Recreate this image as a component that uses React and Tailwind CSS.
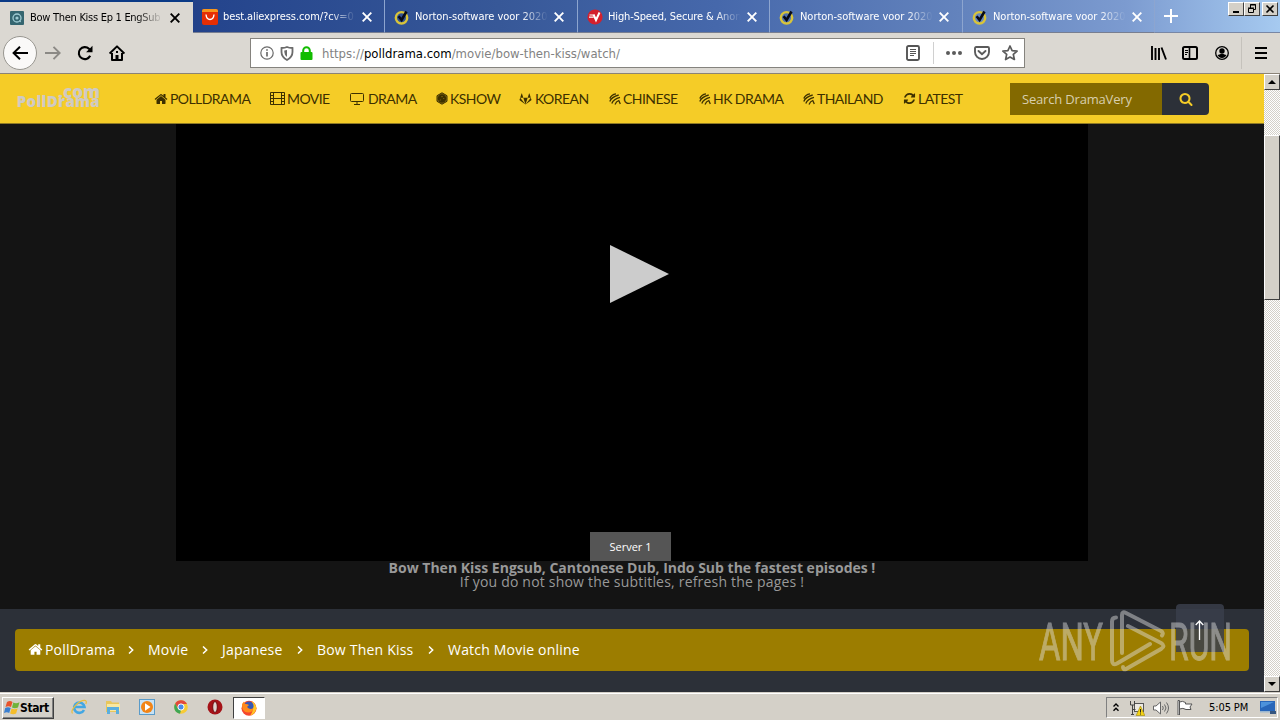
import { FaGitlab } from "react-icons/fa";

const HOME =
  "M1472 992v480q0 26-19 45t-45 19h-384v-384h-256v384h-384q-26 0-45-19t-19-45v-480q0-1 .5-3t.5-3l575-474 575 474q1 2 1 6zm223-69l-62 74q-8 9-21 11h-3q-13 0-21-7l-692-577-692 577q-12 8-24 7-13-2-21-11l-62-74q-8-10-7-23.5t11-21.5l719-599q32-26 76-26t76 26l244 204v-195q0-14 9-23t23-9h192q14 0 23 9t9 23v408l219 182q10 8 11 21.5t-7 23.5z";
const SEARCH =
  "M1216 832q0-185-131.5-316.5t-316.5-131.5-316.5 131.5-131.5 316.5 131.5 316.5 316.5 131.5 316.5-131.5 131.5-316.5zm512 832q0 52-38 90t-90 38q-54 0-90-38l-343-342q-179 124-399 124-143 0-273.5-55.5t-225-150-150-225-55.5-273.5 55.5-273.5 150-225 225-150 273.5-55.5 273.5 55.5 225 150 150 225 55.5 273.5q0 220-124 399l343 343q37 37 37 90z";
const REFRESH =
  "M1639 1056q0 5-1 7-64 268-268 434.5t-478 166.5q-146 0-282.5-55t-243.5-157l-129 129q-19 19-45 19t-45-19-19-45v-448q0-26 19-45t45-19h448q26 0 45 19t19 45-19 45l-137 137q71 66 161 102t187 36q134 0 250-65t186-179q11-17 53-117 8-23 30-23h192q13 0 22.5 9.5t9.5 22.5zm25-800v448q0 26-19 45t-45 19h-448q-26 0-45-19t-19-45 19-45l138-138q-148-137-349-137-134 0-250 65t-186 179q-11 17-53 117-8 23-30 23h-199q-13 0-22.5-9.5t-9.5-22.5v-7q65-268 270-434.5t480-166.5q146 0 284 55.5t245 156.5l130-129q19-19 45-19t45 19 19 45z";

const Glyph = ({ d, className }) => (
  <svg viewBox="0 0 1792 1792" className={className} fill="currentColor">
    <path d={d} />
  </svg>
);

const Film = () => (
  <svg viewBox="0 0 15 13" className="w-[15px] h-[13px] shrink-0" fill="none" stroke="currentColor">
    <path d="M.5 .5h14v12H.5zM3.5 .5v12M11.5 .5v12M3.5 6.5h8M.5 3.5h3M.5 6.5h3M.5 9.5h3M11.5 3.5h3M11.5 6.5h3M11.5 9.5h3" />
  </svg>
);

const Desktop = () => (
  <svg viewBox="0 0 15 13" className="w-[15px] h-[13px] shrink-0" fill="none" stroke="currentColor">
    <rect x=".5" y="1.5" width="13" height="8" rx="1" />
    <path d="M7 9.5v2.5M4 12.5h6" />
  </svg>
);

const Order = () => (
  <svg viewBox="0 0 12 13" className="w-3 h-[13px] shrink-0" fill="none" stroke="currentColor">
    <path d="M6 .8l5 2.9v5.6l-5 2.9-5-2.9V3.7z" fill="currentColor" fillOpacity=".55" />
    <circle cx="6" cy="6.5" r="4.2" fill="currentColor" stroke="none" />
    <path d="M6 4v1.2M8.2 6.5H7.4M3.8 8.5l.8-.6" stroke="#f5cc27" strokeWidth=".5" />
  </svg>
);

const Stripes = () => (
  <svg viewBox="0 0 12 12" className="w-3 h-3 shrink-0" fill="none" stroke="currentColor" strokeWidth="1.3">
    <path d="M.8 5.500Q2.200 1.500 7 .8M.8 8.500Q2.500 3.800 9.700 2M2.800 10.600Q4.500 6 11 4.400M6 11.400Q7.300 8.500 9.800 7.500L11.300 11" />
  </svg>
);

const Close = ({ className }) => (
  <svg viewBox="0 0 10 10" className={`w-[10px] h-[10px] shrink-0 ${className}`} fill="none" stroke="currentColor" strokeWidth="1.9">
    <path d="M.7 .7l8.6 8.6M9.3 .7L.7 9.3" />
  </svg>
);

const DramaIcon = () => (
  <svg viewBox="0 0 14 14" className="w-[14px] h-[14px] shrink-0" fill="none">
    <rect width="14" height="14" rx="1" fill="#356670" />
    <circle cx="7" cy="7" r="4" stroke="#9fcbd3" strokeWidth="1.3" />
    <circle cx="7" cy="7" r="1.6" fill="#9fcbd3" />
    <path d="M9 9.500l2 1.500" stroke="#9fcbd3" />
  </svg>
);

const AliIcon = () => (
  <svg viewBox="0 0 16 16" className="w-4 h-4 shrink-0" fill="none">
    <rect width="16" height="16" rx="2" fill="#e62e04" />
    <path d="M0 3V2q0-2 2-2h12q2 0 2 2v1z" fill="#f7971d" />
    <path d="M4 5.5q.5 5 4 5t4-5" stroke="#fff" strokeWidth="1.4" />
  </svg>
);

const NortonIcon = () => (
  <svg viewBox="0 0 16 16" className="w-4 h-4 shrink-0" fill="none">
    <circle cx="7.5" cy="8.800" r="5.700" stroke="#d8c43a" strokeWidth="2.400" />
    <path d="M4.600 7.200l3 3.800L12.500 2.500" stroke="#080b18" strokeWidth="2.600" />
  </svg>
);

const VpnIcon = () => (
  <svg viewBox="0 0 16 16" className="w-4 h-4 shrink-0" fill="none">
    <circle cx="8" cy="8" r="7.6" fill="#d3202d" />
    <path d="M2.5 6h4M2 8.2h4.7" stroke="#fff" strokeWidth="1.2" />
    <path d="M6.5 5.5L9 11l3.5-7.5" stroke="#fff" strokeWidth="2" />
  </svg>
);

const tabs = [
  { title: "best.aliexpress.com/?cv=0", icon: <AliIcon />, size: "w-[192px]", tracking: "tracking-[-0.1px]" },
  { title: "Norton-software voor 2020", icon: <NortonIcon />, size: "w-[193px]", tracking: "tracking-[-0.03px]" },
  { title: "High-Speed, Secure & Anon", icon: <VpnIcon />, size: "w-[192px]", tracking: "tracking-[-0.15px]" },
  { title: "Norton-software voor 2020", icon: <NortonIcon />, size: "w-[193px]", tracking: "tracking-[-0.03px]" },
  { title: "Norton-software voor 2020", icon: <NortonIcon />, size: "w-[192px]", tracking: "tracking-[-0.03px]" },
];

const TabTitle = ({ children, className }) => (
  <span className={`w-[133px] shrink-0 overflow-hidden whitespace-nowrap text-[11px] leading-4 [mask-image:linear-gradient(to_right,black_80%,transparent_100%)] ${className}`}>
    {children}
  </span>
);

const raised = "border border-t-white border-l-white border-r-[#404040] border-b-[#404040] bg-[#d4d0c8]";

const WinButton = ({ children, className }) => (
  <div className={`flex h-[14px] w-4 items-center justify-center ${raised} ${className}`}>{children}</div>
);

const TabBar = () => (
  <div className="flex h-[33px] bg-[linear-gradient(to_right,#0a246a_0%,#25458d_17%,#375898_39%,#4668ab_56%,#6383bd_75%,#7c9bd0_88%,#a6caf0_100%)]">
    <div className="flex w-[193px] items-center border-t-2 border-[#0a3a86] bg-[#dbd8d2] pl-[10px] text-black">
      <DramaIcon />
      <TabTitle className="ml-1.5 tracking-[-0.28px]">Bow Then Kiss Ep 1 EngSub</TabTitle>
      <Close className="ml-[7px]" />
    </div>
    {tabs.map((tab, i) => (
      <div
        key={i}
        className={`flex shrink-0 items-center border-r border-b border-r-[#8da5cf] border-b-[#777e91] pt-0.5 pl-[9px] text-white ${tab.size}`}
      >
        {tab.icon}
        <TabTitle className={`ml-[5px] ${tab.tracking}`}>{tab.title}</TabTitle>
        <Close className="ml-1.5" />
      </div>
    ))}
    <div className="flex grow justify-between border-b border-[#7887a5] pl-[9px] text-white">
      <svg viewBox="0 0 14 14" className="mt-[9px] h-[14px] w-[14px]" fill="none" stroke="currentColor" strokeWidth="2">
        <path d="M7 0v14M0 7h14" />
      </svg>
      <div className="mt-0.5 mr-[2px] flex">
        <WinButton>
          <svg viewBox="0 0 10 10" className="h-[10px] w-[10px]"><path d="M2 7h6v2H2z" /></svg>
        </WinButton>
        <WinButton>
          <svg viewBox="0 0 10 10" className="h-[10px] w-[10px]" fill="none" stroke="#000">
            <path d="M3.5 4V.5h5v5H7M3 1h6M1.5 4.5h5v4h-5zM1 4h6" />
          </svg>
        </WinButton>
        <WinButton className="ml-[2px]">
          <svg viewBox="0 0 10 10" className="h-[10px] w-[10px]" fill="none" stroke="#000" strokeWidth="1.6">
            <path d="M1.5 1.5l7 7M8.5 1.5l-7 7" />
          </svg>
        </WinButton>
      </div>
    </div>
  </div>
);

const Toolbar = () => (
  <div className="flex h-[41px] items-center border-b border-[#8b8377] bg-[#dbd8d2] text-black">
    {/* History buttons */}
    <div className="ml-[3px] flex h-[34px] w-[34px] shrink-0 items-center justify-center rounded-full border border-[#989690] bg-[#faf9f8]">
      <svg viewBox="0 0 16 16" className="h-4 w-4" fill="none" stroke="currentColor" strokeWidth="2">
        <path d="M16 8H1.8M8 1.8L1.6 8 8 14.2" />
      </svg>
    </div>
    <svg viewBox="0 0 16 16" className="ml-2 h-4 w-4 shrink-0" fill="none" stroke="#8b8985" strokeWidth="1.9">
      <path d="M0 8h14.4M8.5 1.8L14.7 8l-6.2 6.2" />
    </svg>
    <svg viewBox="0 0 16 16" className="ml-4 h-4 w-4 shrink-0" fill="none" stroke="currentColor" strokeWidth="2.1">
      <path d="M13.2 10.8A6 6 0 1 1 12 3.8l1.3 1.3" />
      <path d="M15.5 .8v6.4H9.1z" fill="currentColor" stroke="none" />
    </svg>
    <svg viewBox="0 0 16 16" className="ml-4 h-4 w-4 shrink-0" fill="none" stroke="currentColor" strokeWidth="2">
      <path d="M.6 8.6L8 1.4l7.4 7.2M3 8v7h10V8" strokeLinejoin="round" />
      <path d="M6.5 15v-5h3v5z" fill="currentColor" stroke="none" />
      <path d="M7 7h2" />
    </svg>

    {/* Address bar */}
    <div className="ml-[125px] flex h-[30px] w-[775px] shrink-0 items-center border border-[#85837e] bg-white pl-[9px]">
      <svg viewBox="0 0 14 14" className="h-[14px] w-[14px] shrink-0" fill="none" stroke="#6b6b6b" strokeWidth="1.2">
        <circle cx="7" cy="7" r="6.2" />
        <path d="M7 6v4.5M7 3.2v1.5" strokeWidth="1.7" />
      </svg>
      <svg viewBox="0 0 14 15" className="ml-[6px] h-[15px] w-[14px] shrink-0" fill="none" stroke="#6b6b6b" strokeWidth="1.8">
        <path d="M1.5 2Q5 1.9 7 1q2 .9 5.500 1v4q0 5-5.500 8-5.500-3-5.500-8z" />
        <path d="M7 4v7Q4.300 9 4.300 6V4.600z" fill="#6b6b6b" stroke="none" />
      </svg>
      <svg viewBox="0 0 13 14" className="ml-[6px] h-[14px] w-[13px] shrink-0">
        <rect x=".5" y="6" width="12" height="8" rx="1" fill="#12bc00" />
        <path d="M3.200 7V4.500a3.300 3.300 0 0 1 6.600 0V7" fill="none" stroke="#12bc00" strokeWidth="2" />
      </svg>
      <span className="ml-[9px] w-[581px] whitespace-nowrap pt-px text-[13px] text-[#828282]">
        https://<span className="text-black">polldrama.com</span>/movie/bow-then-kiss/watch/
      </span>
      <svg viewBox="0 0 14 16" className="ml-[3px] h-4 w-[14px] shrink-0" fill="none" stroke="#555">
        <rect x="1" y="1" width="12" height="14" rx="1.500" strokeWidth="1.900" />
        <path d="M4 4.500h6M4 6.500h6M4 8.500h6M4 10.500h4" />
      </svg>
      <div className="ml-[13px] h-[22px] w-px shrink-0 bg-[#d0d0d0]" />
      <svg viewBox="0 0 16 4" className="ml-3 h-1 w-4 shrink-0" fill="#5b5b5b">
        <circle cx="2" cy="2" r="2" />
        <circle cx="8" cy="2" r="2" />
        <circle cx="14" cy="2" r="2" />
      </svg>
      <svg viewBox="0 0 16 14" className="ml-3 h-[14px] w-4 shrink-0" fill="none" stroke="#5b5b5b" strokeWidth="1.900">
        <path d="M2.200 1h11.600Q15 1 15 2.200V6a7 7 0 0 1-14 0V2.200Q1 1 2.200 1z" />
        <path d="M4.500 5L8 8.300 11.500 5" strokeLinecap="round" />
      </svg>
      <svg viewBox="0 0 16 16" className="ml-3 h-4 w-4 shrink-0" fill="none" stroke="#5b5b5b" strokeWidth="1.700" strokeLinejoin="round">
        <path d="M8 1l2.100 4.600 5 .5-3.800 3.300 1.100 5.100L8 12l-4.400 2.500 1.100-5.100L.9 6.100l5-.5z" />
      </svg>
    </div>

    {/* Right side tools */}
    <svg viewBox="0 0 16 14" className="ml-[126px] h-[14px] w-4 shrink-0" fill="none" stroke="currentColor" strokeWidth="1.900">
      <path d="M1 0v14M4.500 2v12M8 2v12M10.500 1.500L15 13.500" />
    </svg>
    <svg viewBox="0 0 16 14" className="ml-[15px] h-[14px] w-4 shrink-0" fill="none" stroke="currentColor">
      <rect x="1" y="1" width="14" height="12" rx="1.500" strokeWidth="2" />
      <path d="M7.500 1v12" strokeWidth="1.600" />
      <path d="M3 4.500h3M3 6.500h3M3 8.500h2" />
    </svg>
    <svg viewBox="0 0 14 14" className="ml-[17px] h-[14px] w-[14px] shrink-0">
      <circle cx="7" cy="7" r="6.300" fill="none" stroke="#000" strokeWidth="1.300" />
      <circle cx="7" cy="5" r="2.700" />
      <path d="M2.500 9q2.500-.5 3-1h3q.5.500 3 1-1.500 3-4.500 3T2.500 9z" />
    </svg>
    <div className="ml-3 h-8 w-px bg-[#c5c2bc]" />
    <div className="ml-[13px] flex flex-col gap-[3px]">
      <div className="h-0.5 w-3 bg-black" />
      <div className="h-0.5 w-3 bg-black" />
      <div className="h-0.5 w-3 bg-black" />
    </div>
  </div>
);

const links = [
  { label: "POLLDRAMA", icon: <Glyph d={HOME} className="-ml-px w-[14px] h-[14px] shrink-0" />, size: "w-[95px]", text: "w-[80px]" },
  { label: "MOVIE", icon: <Film />, size: "w-[60px]", text: "w-[43px]" },
  { label: "DRAMA", icon: <Desktop />, size: "w-[66px]", text: "w-[48px]" },
  { label: "KSHOW", icon: <Order />, size: "w-[63px]", text: "w-[49px]" },
  { label: "KOREAN", icon: <FaGitlab className="w-[13px] h-3 shrink-0" />, size: "w-[70px]", text: "w-[54px]" },
  { label: "CHINESE", icon: <Stripes />, size: "w-[70px]", text: "w-[56px]" },
  { label: "HK DRAMA", icon: <Stripes />, size: "w-[84px]", text: "w-[70px]" },
  { label: "THAILAND", icon: <Stripes />, size: "w-[81px]", text: "w-[67px]" },
  { label: "LATEST", icon: <Glyph d={REFRESH} className="-ml-px w-[13px] h-[13px] shrink-0" />, size: "w-[60px]", text: "w-[46px]" },
];

const SiteHeader = () => (
  <header className="flex h-[50px] shrink-0 items-center border-b border-[#8f7a25] bg-[#f5cc27] text-[#3d3000]">
    <div className="ml-4 flex w-[84px] shrink-0 flex-col items-end pb-1 font-['Open_Sans',sans-serif] font-extrabold text-[#cfcac4]">
      <span className="text-[17px] leading-[10px]">.com</span>
      <span className="text-[15px] leading-[9px] tracking-[0.3px]">PollDrama</span>
    </div>
    <nav className="ml-[55px] flex gap-5 font-['Lato',sans-serif] text-[14px]">
      {links.map((link) => (
        <a key={link.label} className={`flex shrink-0 items-center justify-between whitespace-nowrap ${link.size}`}>
          {link.icon}
          <span className={`tracking-[-0.56px] ${link.text}`}>{link.label}</span>
        </a>
      ))}
    </nav>
    <div className="ml-[46px] flex h-8 shrink-0 font-['Open_Sans',sans-serif] text-[13px]">
      <div className="flex w-[152px] items-center bg-[#836900] pt-0.5 pl-3 tracking-[-0.18px] text-[#d8cfae]">Search DramaVery</div>
      <div className="flex w-[47px] items-center justify-center rounded-r bg-[#2c3038] text-[#f5cc27]">
        <Glyph d={SEARCH} className="h-[14px] w-[14px]" />
      </div>
    </div>
  </header>
);

const Player = () => (
  <section className="flex h-[485px] shrink-0 flex-col items-center bg-[#141414] font-['Open_Sans',sans-serif] text-[#999]">
    <div className="flex h-[437px] w-[912px] flex-col items-center bg-black">
      <svg viewBox="0 0 59 59" className="mt-[121px] ml-[14px] h-[59px] w-[59px]">
        <path d="M0 0l59 29L0 58z" fill="#ccc" />
      </svg>
      <div className="mt-auto mr-[3px] flex h-[29px] w-[81px] items-center justify-center bg-[#555] pt-0.5 text-[11px] text-white">
        Server 1
      </div>
    </div>
    <p className="whitespace-nowrap text-[14px] font-bold leading-[14px]">
      Bow Then Kiss Engsub, Cantonese Dub, Indo Sub the fastest episodes !
    </p>
    <p className="whitespace-nowrap text-[14px] leading-[14px] tracking-[0.2px]">
      If you do not show the subtitles, refresh the pages !
    </p>
  </section>
);

const crumbs = [
  { label: "Movie", size: "w-[40px]" },
  { label: "Japanese", size: "w-[61px]" },
  { label: "Bow Then Kiss", size: "w-[97px]" },
  { label: "Watch Movie online", size: "w-[132px]" },
];

const Breadcrumb = () => (
  <div className="flex h-[42px] items-center rounded bg-[#9c7d00] pb-px pl-[13px] font-['Open_Sans',sans-serif] text-[14px] tracking-[0.2px] text-white">
    <Glyph d={HOME} className="h-[15px] w-[15px]" />
    <span className="ml-[2px] w-[69px]">PollDrama</span>
    {crumbs.map((crumb) => (
      <div key={crumb.label} className="flex items-center">
        <svg viewBox="0 0 6 8" className="ml-[14px] h-2 w-[6px] first:ml-[14px]" fill="none" stroke="currentColor" strokeWidth="1.500">
          <path d="M1 .5L4.700 4 1 7.500" />
        </svg>
        <span className={`ml-[14px] whitespace-nowrap ${crumb.size}`}>{crumb.label}</span>
      </div>
    ))}
  </div>
);

const Watermark = () => (
  <svg viewBox="0 0 194 64" className="absolute left-[1038px] top-[609px] h-16 w-[194px] opacity-45" fill="#e4e4e4">
    <g fontFamily="Roboto, sans-serif" fontSize="52" stroke="#e4e4e4" strokeWidth="1">
      <text x="1" y="50.500" textLength="64" lengthAdjust="spacingAndGlyphs">ANY</text>
      <text x="131" y="50.500" textLength="63" lengthAdjust="spacingAndGlyphs">RUN</text>
    </g>
    <g fill="none" stroke="#e4e4e4" strokeWidth="4" strokeLinejoin="round" strokeLinecap="round">
      <path d="M78 8.500q-4 0-4 4V51q0 6 5 3.500L112 35M84 44V6q0-4 4-2l35 18q3 2 1 4.500M90 17l33 17q5 3 0 6L88 60q-3 1-3-2" />
    </g>
  </svg>
);

const checker =
  "bg-[repeating-conic-gradient(#fff_0_25%,#d4d0c8_0_50%)] bg-[length:2px_2px]";

const ScrollBar = () => (
  <div className={`flex w-4 shrink-0 flex-col ${checker}`}>
    <div className={`flex h-4 items-center justify-center ${raised}`}>
      <svg viewBox="0 0 8 4" className="h-1 w-2"><path d="M0 4l4-4 4 4z" /></svg>
    </div>
    <div className={`mt-[45px] h-[165px] ${raised}`} />
    <div className={`mt-auto flex h-4 items-center justify-center ${raised}`}>
      <svg viewBox="0 0 8 4" className="h-1 w-2"><path d="M0 0l4 4 4-4z" /></svg>
    </div>
  </div>
);

const WindowsFlag = () => (
  <svg viewBox="0 0 16 15" className="h-[15px] w-4 shrink-0">
    <path d="M3 2q3-2 5.500 0L7 7Q4.500 5.500 1.500 7z" fill="#e8532b" />
    <path d="M9.300 2.500Q12 4 15.500 2.300L14 7.500q-3.500 1.500-6-.1z" fill="#6fb33c" />
    <path d="M1.200 8Q4 6.500 6.700 8L5.200 13Q3 11.500 0 13z" fill="#3a7fd0" />
    <path d="M7.600 8.400q2.500 1.500 6 .1l-1.500 5q-3 1.500-6-.1z" fill="#f5bd2a" />
  </svg>
);

const TaskBar = () => (
  <footer className="flex h-7 items-center border-t border-[#d4d0c8] bg-[#d4d0c8] text-[11px] text-black shadow-[inset_0_1px_0_#fff]">
    <div className={`ml-0.5 mt-0.5 flex h-[22px] w-[52px] shrink-0 items-center pl-px ${raised} shadow-[inset_-1px_-1px_0_#808080]`}>
      <WindowsFlag />
      <span className="text-[12px] font-bold tracking-[-0.4px]">Start</span>
    </div>

    {/* Internet Explorer */}
    <svg viewBox="0 0 16 16" className="ml-[17px] h-4 w-4 shrink-0" fill="none">
      <path d="M13 11a5.200 5.200 0 1 1 .5-3H4.500" stroke="#43a7e3" strokeWidth="2.600" />
      <path d="M1.500 14.500Q-.5 12 4.500 6.500T14.500 1.500q1.500 1 .3 3.500" stroke="#e9bd3e" strokeWidth="1.200" />
    </svg>
    {/* Explorer */}
    <svg viewBox="0 0 16 16" className="ml-[18px] h-4 w-4 shrink-0">
      <path d="M1 2h5l1 1.500h7V13H1z" fill="#e8c65c" />
      <path d="M2 5h13v7H2z" fill="#f8e7a0" />
      <path d="M2 15V8h12v7h-3v-4H5v4z" fill="#5aaede" />
    </svg>
    {/* Media player */}
    <svg viewBox="0 0 16 16" className="ml-[18px] h-4 w-4 shrink-0">
      <rect x=".5" y=".5" width="15" height="15" fill="#c7e2f5" stroke="#5a9bc9" />
      <circle cx="8" cy="8" r="6" fill="#f28416" />
      <path d="M6 4.300l5.500 3.700L6 11.700z" fill="#fff" />
    </svg>
    {/* Chrome */}
    <svg viewBox="0 0 16 16" className="ml-[18px] h-4 w-4 shrink-0">
      <circle cx="8" cy="8" r="6.800" fill="#f7cb35" />
      <path d="M2.200 4.500A6.800 6.800 0 0 1 14 5H8L5 9.800z" fill="#e2483c" />
      <path d="M2.200 4.500L5 9.800l3 1.500-1 3.500A6.800 6.800 0 0 1 2.200 4.500z" fill="#3fa655" />
      <circle cx="8" cy="8" r="3.100" fill="#4a8bea" stroke="#fff" />
    </svg>
    {/* Opera */}
    <svg viewBox="0 0 16 16" className="ml-[18px] h-4 w-4 shrink-0">
      <circle cx="8" cy="8" r="7.500" fill="#a51218" />
      <ellipse cx="8" cy="8" rx="2.300" ry="5.500" fill="#ded5d0" stroke="#6e090e" />
    </svg>
    {/* Firefox */}
    <div className="ml-[10px] mt-0.5 flex h-[22px] w-8 shrink-0 items-center justify-center border border-t-[#404040] border-l-[#404040] border-r-white border-b-white bg-white">
      <svg viewBox="0 0 16 16" className="h-4 w-4">
        <circle cx="8" cy="8.300" r="7.500" fill="#f5472d" />
        <path d="M11 1q5 4 4.300 8-1.500 5-6 6.500 3-4 2.400-8z" fill="#ffc526" />
        <circle cx="8" cy="6" r="4.600" fill="#3557b5" />
        <path d="M1 4l2-2.500 1 2.500q2-.5 4 1L6 7q3 3.500 6.500 1-1 4.500-5 4.500T1.500 9z" fill="#ff8a1c" />
      </svg>
    </div>

    {/* Tray */}
    <div className="ml-auto mr-0.5 mt-0.5 flex h-[21px] w-[172px] items-center border border-t-[#808080] border-l-[#808080] border-r-white border-b-white">
      <svg viewBox="0 0 6 9" className="ml-1.5 h-[9px] w-[6px] shrink-0" fill="none" stroke="#000" strokeWidth="1.400">
        <path d="M.5 3.500L3 1l2.500 2.500M.5 7.800L3 5.300l2.500 2.500" />
      </svg>
      <svg viewBox="0 0 16 16" className="ml-[10px] h-4 w-4 shrink-0" fill="none">
        <rect x="5.500" y="3.500" width="9" height="8" fill="#ece9e2" stroke="#555" />
        <path d="M1.500 1v4h4V1M3.500 5v10M3.500 9.500h3M2 14.500h3" stroke="#444" />
        <path d="M11.500 6l4.300 9.500H7.200z" fill="#f5d313" stroke="#9a8308" strokeWidth=".6" />
        <path d="M11.500 9v3.500M11.500 13.500v1" stroke="#222" />
      </svg>
      <svg viewBox="0 0 16 14" className="ml-2 h-[14px] w-4 shrink-0" fill="#fff" stroke="#666">
        <path d="M.5 5h2.500L7.500 1v12L3 9H.5z" />
        <path d="M9.500 5q1.500 2 0 4M11.500 3.500q3 3.500 0 7M13.500 1.500q4 5.500 0 11" fill="none" />
      </svg>
      <svg viewBox="0 0 16 15" className="ml-2 h-[15px] w-4 shrink-0" fill="#fff" stroke="#555">
        <path d="M1 .5h1.500V15H1zM2.500 2q3-1.500 6 .5v1.500h6.500l-2 3 1 2.500H9q-3-2-6.500-.5z" />
      </svg>
      <span className="ml-4 w-[41px] whitespace-nowrap pt-px tracking-[-0.1px]">5:05 PM</span>
      <svg viewBox="0 0 16 13" className="ml-[10px] h-[13px] w-4 shrink-0">
        <path d="M0 0h15v10H0z" fill="#2866b9" />
        <path d="M1 1h13L1 7z" fill="#4d92db" />
        <path d="M0 10h16v1.500H0z" fill="#9cb7cf" />
        <path d="M10 10h6v3h-6z" fill="#35557f" />
      </svg>
    </div>
  </footer>
);

const App = () => (
  <div className="relative flex h-[720px] w-[1280px] flex-col overflow-hidden bg-[#d4d0c8] font-['DejaVu_Sans_Condensed','DejaVu_Sans',sans-serif]">
    <TabBar />
    <Toolbar />
    <div className="flex h-[618px] overflow-hidden">
      <main className="flex w-[1264px] shrink-0 flex-col bg-[#2c3038]">
        <SiteHeader />
        <Player />
        <div className="pt-5 pr-[15px] pl-[15px]">
          <Breadcrumb />
        </div>
      </main>
      <ScrollBar />
    </div>
    <TaskBar />

    {/* Back to top */}
    <div className="absolute left-[1176px] top-[604px] flex h-12 w-12 items-center justify-center rounded-t-sm bg-[#3a3e4b]/85">
      <svg viewBox="0 0 9 20" className="mt-1 mr-px h-5 w-[9px]" fill="none" stroke="#fff" strokeWidth="1.300">
        <path d="M4.500 20V1M.7 5l3.800-4 3.800 4" />
      </svg>
    </div>
    <Watermark />
  </div>
);

export default App;
